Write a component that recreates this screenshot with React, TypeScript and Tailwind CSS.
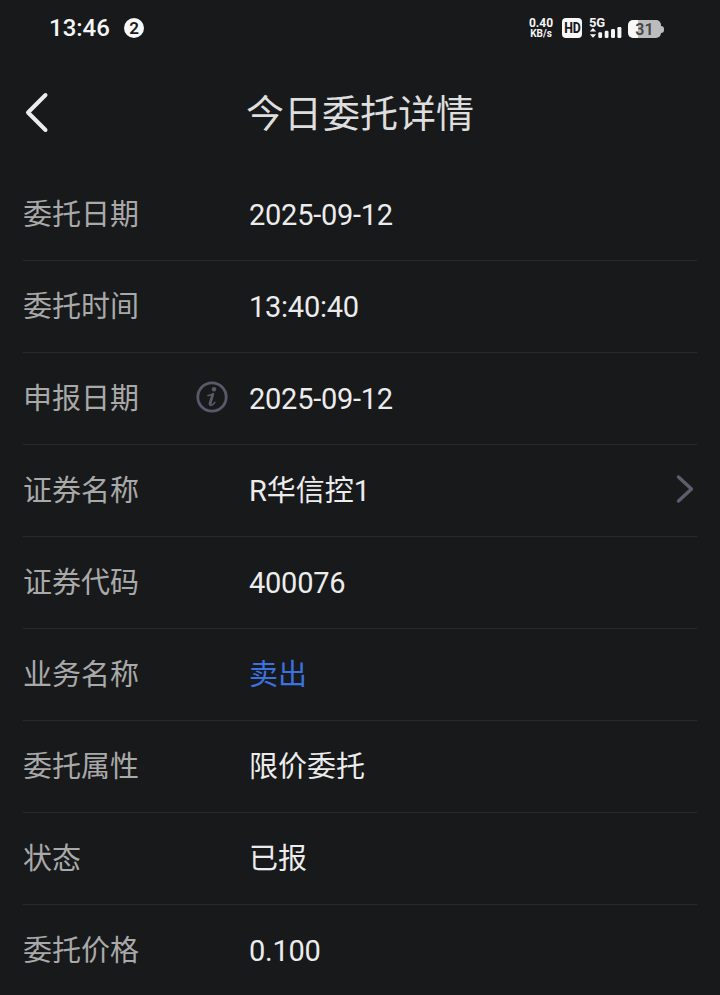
import { ReactNode } from "react";

const rows: { label: string; value: string; blue?: boolean; number?: boolean; info?: boolean; link?: boolean }[] = [
  { label: "委托日期", value: "2025-09-12", number: true },
  { label: "委托时间", value: "13:40:40", number: true },
  { label: "申报日期", value: "2025-09-12", number: true, info: true },
  { label: "证券名称", value: "R华信控1", link: true },
  { label: "证券代码", value: "400076", number: true },
  { label: "业务名称", value: "卖出", blue: true },
  { label: "委托属性", value: "限价委托" },
  { label: "状态", value: "已报" },
  { label: "委托价格", value: "0.100", number: true },
];

function SignalIcon() {
  return (
    <svg width="33" height="22" viewBox="0 0 33 22" fill="#f5f5f5">
      <path d="M0.8 14.6L4 11L7.2 14.6Z" />
      <path d="M0.8 17.2L4 20.8L7.2 17.2Z" />
      <rect x="9.3" y="15.3" width="3.8" height="5.7" rx="1.2" />
      <rect x="15.7" y="13.8" width="3.8" height="7.2" rx="1.2" />
      <rect x="22" y="12" width="4" height="9" rx="1.2" />
      <rect x="28.4" y="10" width="4" height="11" rx="1.2" />
    </svg>
  );
}

function StatusBar() {
  return (
    <div className="flex h-14 items-center pl-[49px] pr-14 text-[#f5f5f5]">
      <span className="w-[61px] text-[24px] font-medium leading-none">13:46</span>
      <span className="ml-[14px] flex h-5 w-5 items-center justify-center rounded-full bg-[#f8f8f8] text-[17px] font-semibold leading-none text-[#18191b]">
        2
      </span>
      <div className="ml-auto flex items-center">
        <div className="flex w-6 flex-col items-center font-bold">
          <span className="text-[12px] leading-[12px]">0.40</span>
          <span className="text-[10px] leading-[10px]">KB/s</span>
        </div>
        <span className="ml-[9px] flex h-5 w-5 items-center justify-center rounded bg-[#f8f8f8] leading-none text-[#18191b]">
          <span className="scale-x-[0.88] text-[14px] font-extrabold">HD</span>
        </span>
        <div className="relative ml-[7px]">
          <SignalIcon />
          <span className="absolute left-0 top-0 text-[13px] font-bold leading-[12px] tracking-[-0.3px]">5G</span>
        </div>
        <div className="ml-[6px] flex items-center pt-[2px]">
          <span className="flex h-[18px] w-[33px] items-center justify-center rounded-[5px] bg-linear-to-r from-[#f8f8f8] from-31% to-[#bcbcbc] to-31% pt-[2px] text-[16px] font-semibold leading-none text-[#444]">
            31
          </span>
          <span className="h-[7px] w-[3px] rounded-r-full bg-[#bcbcbc]" />
        </div>
      </div>
    </div>
  );
}

function InfoIcon() {
  return (
    <svg className="mb-1" width="32" height="32" viewBox="0 0 32 32" fill="none" stroke="#565a69">
      <circle cx="16" cy="16" r="14.2" strokeWidth="2.8" />
      <circle cx="18" cy="8.2" r="2.2" fill="#565a69" stroke="none" />
      <path d="M12 14.6C13.8 14.1 15.6 13.3 17.4 12.6L14.2 23C13.6 25.6 16.4 24.2 18.8 21.4" strokeWidth="1.6" strokeLinecap="round" strokeLinejoin="round" />
      <path d="M16.5 14.2L13.9 23" strokeWidth="2.8" strokeLinecap="round" />
    </svg>
  );
}

function Row({ label, children, info, link }: { label: string; children: ReactNode; info?: boolean; link?: boolean }) {
  return (
    <div className="flex h-[92px] items-center border-b border-[#292a2d] text-[29px] leading-none">
      <span className="w-[173px] pt-[2px] text-[#a9a9a9]">{label}</span>
      <span className="w-[53px]">{info && <InfoIcon />}</span>
      {children}
      {link && (
        <svg className="mb-[3px] ml-auto mr-[3px]" width="18" height="30" viewBox="0 0 18 30" fill="none" stroke="#5c5f6b" strokeWidth="3.4" strokeLinecap="round" strokeLinejoin="round">
          <path d="M2.5 3L15.5 15L2.5 27" />
        </svg>
      )}
    </div>
  );
}

export default function App() {
  return (
    <div className="h-[995px] w-[720px] overflow-hidden bg-[#18191b] font-['Roboto','Noto_Sans_CJK_SC',sans-serif]">
      <StatusBar />
      <header className="grid h-[113px] grid-cols-[1fr_auto_1fr] items-center px-6">
        <svg width="26" height="42" viewBox="0 0 26 42" fill="none" stroke="#ececec" strokeWidth="4" strokeLinecap="round" strokeLinejoin="round">
          <path d="M21.5 3L4 20.5L21.5 38" />
        </svg>
        <h1 className="pt-[3px] text-[38px] leading-none text-[#dedede]">今日委托详情</h1>
      </header>
      <main className="px-[23px]">
        {rows.map((row) => (
          <Row key={row.label} label={row.label} info={row.info} link={row.link}>
            <span className={`pt-[2px] ${row.blue ? "text-[#3a72e0]" : "text-[#ececec]"} ${row.number ? "tracking-[-0.25px]" : ""}`}>
              {row.value}
            </span>
          </Row>
        ))}
      </main>
    </div>
  );
}
